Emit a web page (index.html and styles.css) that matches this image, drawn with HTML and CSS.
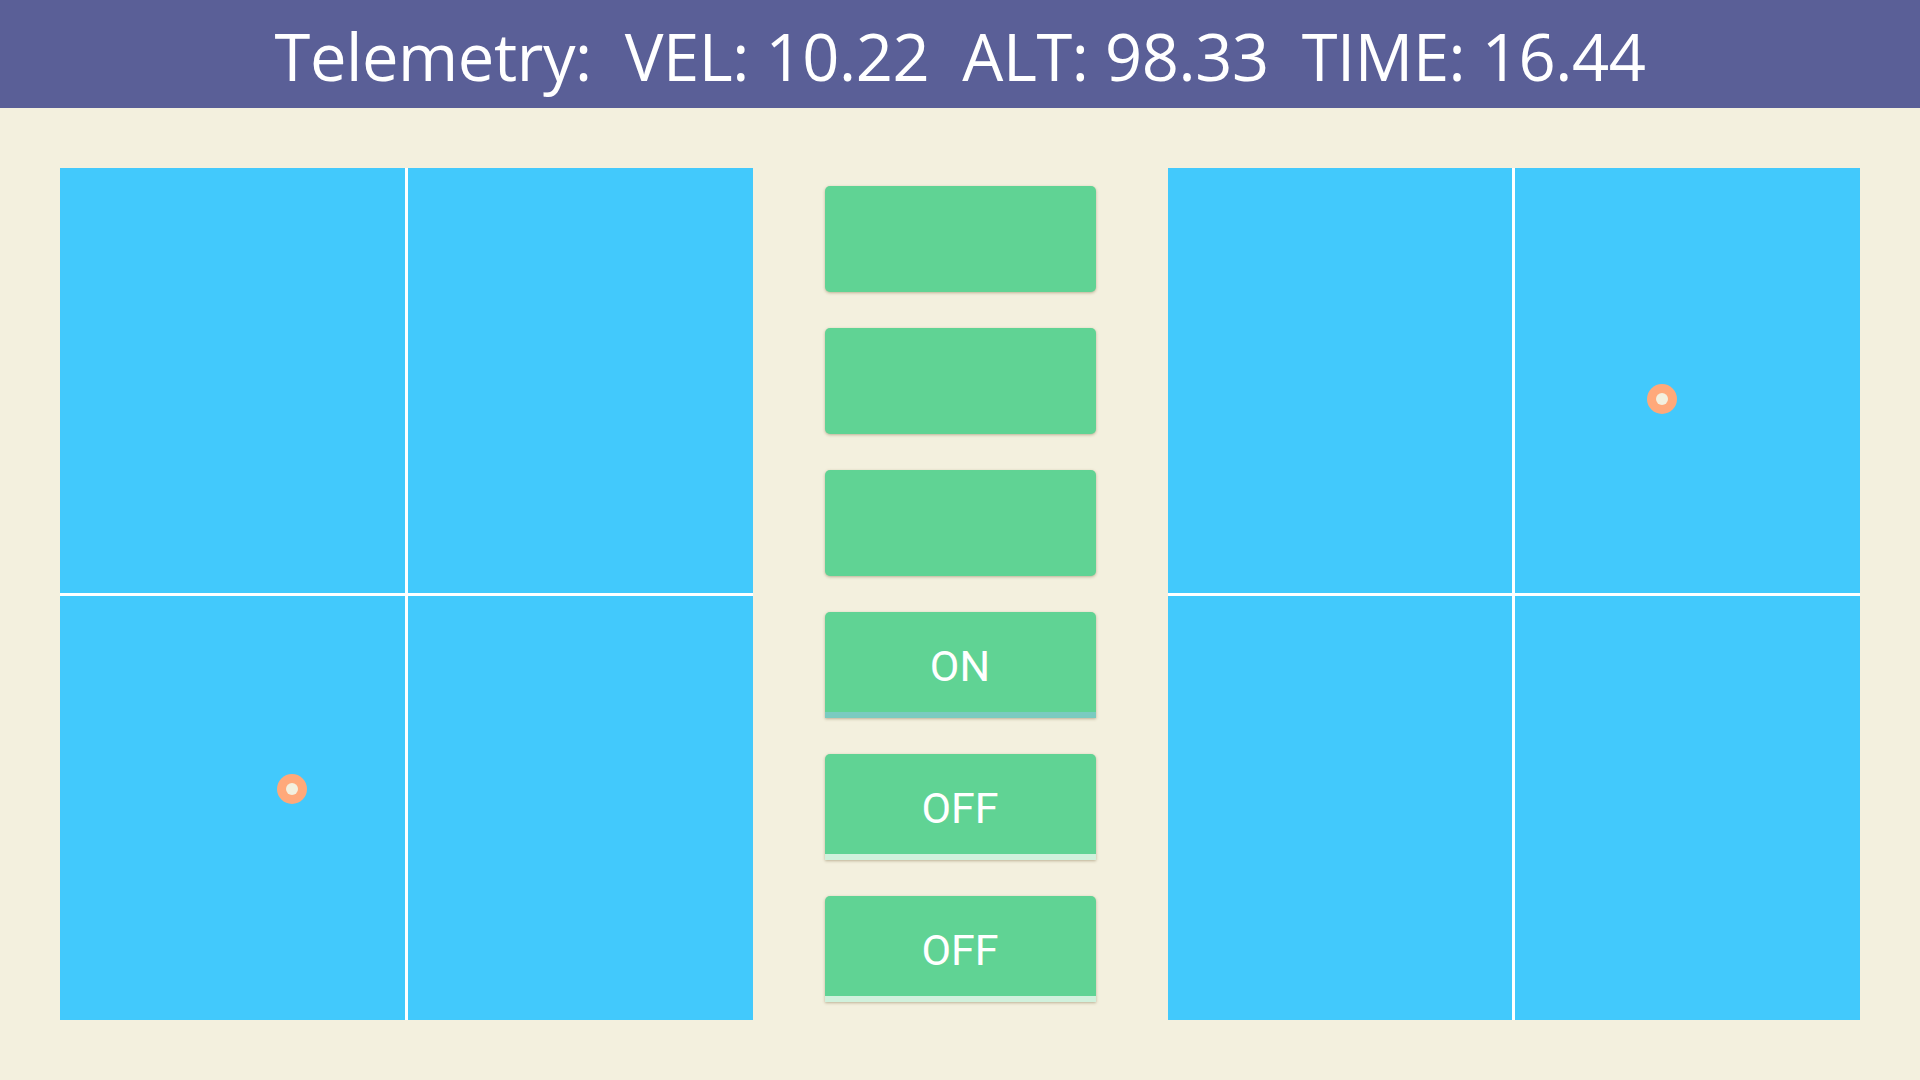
FILE: index.html
```html
<!DOCTYPE html>
<html>
<head>
<meta charset="utf-8">
<link rel="stylesheet" href="styles.css">
</head>
<body>
<header class="bar">
  <span class="telemetry">Telemetry:&nbsp; VEL: 10.22&nbsp; ALT: 98.33&nbsp; TIME: 16.44</span>
</header>
<main class="main">
  <section class="pad">
    <div class="cell"></div><div class="cell"></div><div class="cell"></div><div class="cell"></div>
    <div class="dot" style="left:232px;top:621px"></div>
  </section>
  <section class="controls">
    <button class="btn"></button>
    <button class="btn"></button>
    <button class="btn"></button>
    <button class="btn btn-on">ON</button>
    <button class="btn btn-off">OFF</button>
    <button class="btn btn-off">OFF</button>
  </section>
  <section class="pad">
    <div class="cell"></div><div class="cell"></div><div class="cell"></div><div class="cell"></div>
    <div class="dot" style="left:494px;top:231px"></div>
  </section>
</main>
</body>
</html>
```
FILE: styles.css
```css
* { box-sizing: border-box; }
html, body { margin: 0; padding: 0; }
body {
  width: 1920px;
  height: 1080px;
  background: #f3f0de;
  font-family: "Open Sans", "Noto Sans", sans-serif;
  overflow: hidden;
}
.bar {
  height: 108px;
  background: #5a5f97;
  display: flex;
  align-items: center;
  justify-content: center;
}
.telemetry {
  color: #ffffff;
  font-size: 65px;
  letter-spacing: -0.4px;
  line-height: 1;
  margin-top: 4px;
}
.main {
  display: flex;
  align-items: center;
  padding: 60px;
  gap: 72px;
  height: 972px;
}
.pad {
  position: relative;
  width: 693px;
  height: 852px;
  display: grid;
  grid-template-columns: 1fr 1fr;
  grid-template-rows: 1fr 1fr;
  gap: 3px;
  background: #ffffff;
}
.cell { background: #42c9fc; }
.dot {
  position: absolute;
  width: 30px;
  height: 30px;
  margin: -15px 0 0 -15px;
  border-radius: 50%;
  background: #ffa97a;
  display: flex;
  align-items: center;
  justify-content: center;
}
.dot::after {
  content: "";
  width: 12px;
  height: 12px;
  border-radius: 50%;
  background: #f3f0de;
}
.controls {
  display: flex;
  flex-direction: column;
  gap: 36px;
  width: 271px;
}
.btn {
  width: 271px;
  height: 106px;
  border: none;
  border-radius: 5px;
  background: #60d394;
  box-shadow: 0 1px 3px rgba(120, 100, 60, 0.45);
  color: #ffffff;
  font-family: Roboto, "Open Sans", sans-serif;
  font-size: 43px;
  padding: 0;
  padding-top: 8px;
}
.btn-on { border-bottom: 6px solid #7acbc0; border-radius: 5px 5px 0 0; }
.btn-off { border-bottom: 6px solid #d0f1dc; border-radius: 5px 5px 0 0; }
```
